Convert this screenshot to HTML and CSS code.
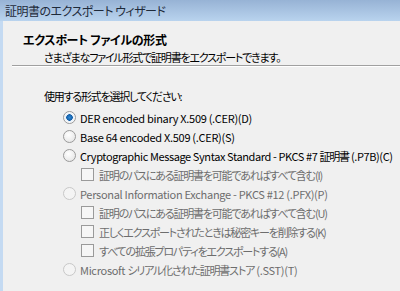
FILE: index.html
```html
<!DOCTYPE html>
<html lang="ja">
<head>
    <meta charset="UTF-8">
    <title>証明書のエクスポート ウィザード</title>
    <link rel="stylesheet" href="styles.css">
</head>
<body>
    <div class="window">
        <div class="titlebar">証明書のエクスポート ウィザード</div>
        <div class="frame">
            <div class="frame-edge"></div>
            <div class="client">
                <div class="header">
                    <h1>エクスポート ファイルの形式</h1>
                    <p class="subtitle ja">さまざまなファイル形式で証明書をエクスポートできます。</p>
                </div>
                <hr class="separator">

                <p class="prompt ja">使用する形式を選択してください:</p>

                <div class="options">
                    <div class="option">
                        <span class="radio checked"></span>
                        <span class="label">DER encoded binary X.509 (.CER)(D)</span>
                    </div>
                    <div class="option">
                        <span class="radio"></span>
                        <span class="label">Base 64 encoded X.509 (.CER)(S)</span>
                    </div>
                    <div class="option">
                        <span class="radio"></span>
                        <span class="label tight">Cryptographic Message Syntax Standard - PKCS #7 <span class="ja">証明書</span> (.P7B)(C)</span>
                    </div>
                    <div class="option sub disabled">
                        <span class="check"></span>
                        <span class="label ja">証明のパスにある証明書を可能であればすべて含む(I)</span>
                    </div>
                    <div class="option disabled">
                        <span class="radio"></span>
                        <span class="label">Personal Information Exchange - PKCS #12 (.PFX)(P)</span>
                    </div>
                    <div class="option sub disabled">
                        <span class="check"></span>
                        <span class="label ja">証明のパスにある証明書を可能であればすべて含む(U)</span>
                    </div>
                    <div class="option sub disabled">
                        <span class="check"></span>
                        <span class="label ja">正しくエクスポートされたときは秘密キーを削除する(K)</span>
                    </div>
                    <div class="option sub disabled">
                        <span class="check"></span>
                        <span class="label ja">すべての拡張プロパティをエクスポートする(A)</span>
                    </div>
                    <div class="option disabled">
                        <span class="radio"></span>
                        <span class="label">Microsoft <span class="ja">シリアル化された証明書ストア</span> (.SST)(T)</span>
                    </div>
                </div>
            </div>
        </div>
    </div>
</body>
</html>
```

FILE: styles.css
```css
body {
    margin: 0;
    font-family: "Noto Sans CJK JP", "Liberation Sans", sans-serif;
    font-size: 11px;
    font-feature-settings: "palt";
    color: #000;
    background: #f0f0f0;
}

.label {
    letter-spacing: -0.3px;
}

.label.tight {
    letter-spacing: -0.4px;
}

.ja,
.label.ja,
.label .ja {
    letter-spacing: -1.2px;
}

.window {
    display: flex;
    flex-direction: column;
    height: 291px;
    overflow: hidden;
}

.titlebar {
    height: 21px;
    line-height: 21px;
    padding-left: 5px;
    font-size: 12px;
    letter-spacing: -0.5px;
    color: #1e2a3a;
    background: linear-gradient(to bottom, #97b3d5, #b9d3ee);
    white-space: nowrap;
}

.frame {
    flex: 1;
    display: flex;
}

.frame-edge {
    width: 3px;
    background: #c4daf2;
}

.client {
    flex: 1;
    background: #f0f0f0;
}

.header {
    padding: 11px 0 0 20px;
}

h1 {
    margin: 0;
    font-size: 12px;
    font-weight: bold;
    letter-spacing: -0.3px;
    line-height: 16px;
}

.subtitle {
    margin: 1px 0 0 21px;
    line-height: 16px;
}

.separator {
    margin: 0 0 0 9px;
    border: none;
    border-top: 1px solid #a0a0a0;
    border-bottom: 1px solid #fff;
    height: 0;
}

.prompt {
    margin: 21px 0 0 41px;
    line-height: 16px;
}

.options {
    margin: 4px 0 0 60px;
}

.option {
    display: flex;
    align-items: center;
    gap: 4px;
    height: 19px;
    white-space: nowrap;
}

.option.sub {
    margin-left: 18px;
}

.option.disabled {
    color: #6d6d6d;
}

.radio {
    width: 11px;
    height: 11px;
    border-radius: 50%;
    border: 1px solid #9a9a9a;
    background: radial-gradient(circle at 40% 35%, #fff, #e0e0e0);
    flex-shrink: 0;
}

.radio.checked {
    background: radial-gradient(circle, #2f8bd6 0, #145ea8 3px, #e6eef6 3.5px, #fff 6px);
}

.disabled .radio {
    border-color: #c8c8c8;
    background: #f4f4f4;
}

.check {
    width: 11px;
    height: 11px;
    border: 1px solid #9a9a9a;
    background: #f6f6f6;
    flex-shrink: 0;
    margin-right: 1px;
}
```
